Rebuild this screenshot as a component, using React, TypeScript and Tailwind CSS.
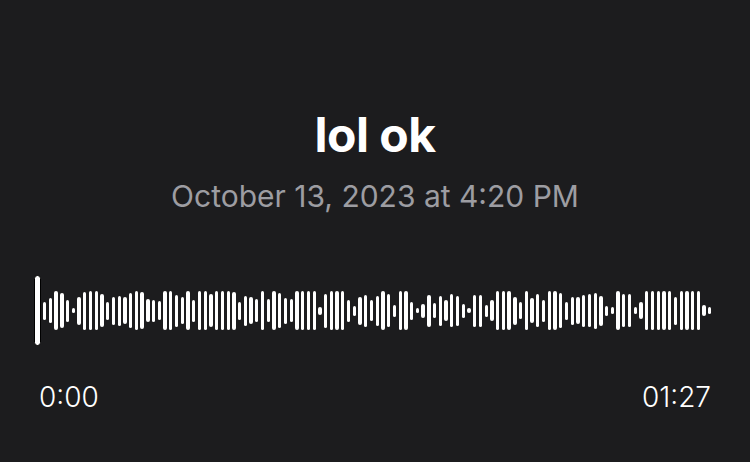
import React from "react";

const HEIGHTS = [
  18, 25, 39, 35, 22, 5, 28, 38, 39, 39, 33, 18, 28, 30, 27, 35, 39, 37, 23, 22,
  19, 39, 39, 32, 27, 39, 22, 39, 39, 33, 39, 39, 39, 38, 18, 30, 27, 23, 39,
  23, 39, 35, 26, 23, 39, 39, 39, 39, 8, 34, 39, 39, 39, 22, 10, 28, 32, 21, 30,
  39, 33, 12, 39, 39, 18, 5, 14, 32, 15, 30, 21, 33, 30, 14, 5, 32, 32, 12, 21, 39,
  39, 39, 28, 17, 39, 25, 33, 22, 39, 39, 35, 18, 28, 27, 32, 33, 36, 30, 10, 7,
  39, 33, 33, 7, 17, 39, 39, 39, 39, 39, 28, 39, 39, 39, 39, 11, 7,
];

export default function App() {
  return (
    <div
      className="w-[750px] h-[462px] bg-[#1c1c1e] flex flex-col overflow-hidden"
      style={{ fontFamily: "Inter, 'Noto Sans', sans-serif" }}
    >
      <div className="pt-[111px] flex flex-col items-center">
        <div className="text-white font-bold text-[48px] leading-none tracking-[-0.5px]">
          lol ok
        </div>
        <div className="mt-[22px] text-[#9d9da2] text-[30px] leading-none">
          October 13, 2023 at 4:20 PM
        </div>
      </div>

      <div className="relative mt-[64px] h-[71px] pl-[43px] pr-[39px] flex items-center gap-[2.45px]">
        {HEIGHTS.map((h, i) => (
          <div
            key={i}
            className="w-[3.3px] shrink-0 rounded-full bg-white"
            style={{ height: `${h}px` }}
          />
        ))}
        <div className="absolute left-[34px] top-0 h-[71px] w-[7px] rounded-full bg-white border border-black" />
      </div>

      <div className="mt-[37px] px-[39px] flex justify-between text-white text-[28px] font-light leading-none">
        <span>0:00</span>
        <span>01:27</span>
      </div>
    </div>
  );
}
